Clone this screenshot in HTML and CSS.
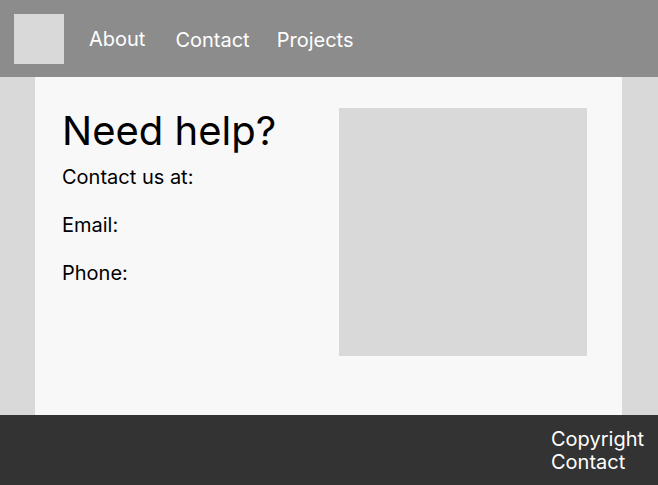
FILE: index.html
```html
<!DOCTYPE html>
<html>
<head>
<meta charset="utf-8">
<link rel="stylesheet" href="styles.css">
</head>
<body>
<header class="topbar">
  <div class="logo"></div>
  <nav class="nav">
    <a class="nav-link nav-about" href="#">About</a>
    <a class="nav-link nav-contact" href="#">Contact</a>
    <a class="nav-link nav-projects" href="#">Projects</a>
  </nav>
</header>
<main class="main">
  <section class="card">
    <div class="info">
      <h1 class="title">Need help?</h1>
      <p class="line">Contact us at:</p>
      <p class="line">Email:</p>
      <p class="line">Phone:</p>
    </div>
    <div class="picture"></div>
  </section>
</main>
<footer class="footer">
  <div class="footer-links">
    <div>Copyright</div>
    <div>Contact</div>
  </div>
</footer>
</body>
</html>
```
FILE: styles.css
```css
* { box-sizing: border-box; }
html, body { margin: 0; padding: 0; }
body {
  font-family: Inter, "Noto Sans", sans-serif;
  background: #d9d9d9;
  color: #000;
}
.topbar {
  height: 77px;
  background: #8c8c8c;
  display: flex;
  align-items: flex-start;
  padding: 14px;
}
.logo {
  width: 50px;
  height: 50px;
  background: #d9d9d9;
  flex: none;
}
.nav {
  display: flex;
  margin-left: 25px;
  padding-top: 14px;
}
.nav-link {
  color: #fff;
  text-decoration: none;
  font-size: 20px;
  line-height: 24px;
}
.nav-about { margin-top: -1px; }
.nav-contact { margin-left: 30px; }
.nav-projects { margin-left: 27px; }
.main {
  padding: 0 36px 0 35px;
}
.card {
  background: #f8f8f8;
  height: 338px;
  display: flex;
  align-items: flex-start;
  padding: 31px 35px 0 27px;
}
.info { flex: 1; }
.title {
  font-size: 40px;
  font-weight: 400;
  line-height: 48px;
  margin: -1px 0 10px;
}
.line {
  font-size: 20px;
  line-height: 24px;
  margin: 0 0 24px;
}
.picture {
  width: 248px;
  height: 248px;
  background: #d9d9d9;
  flex: none;
}
.footer {
  height: 70px;
  background: #333333;
  color: #fff;
  display: flex;
  justify-content: flex-end;
  padding: 13px 14px 0 0;
}
.footer-links {
  font-size: 20px;
  line-height: 23px;
  width: 93px;
}
```
